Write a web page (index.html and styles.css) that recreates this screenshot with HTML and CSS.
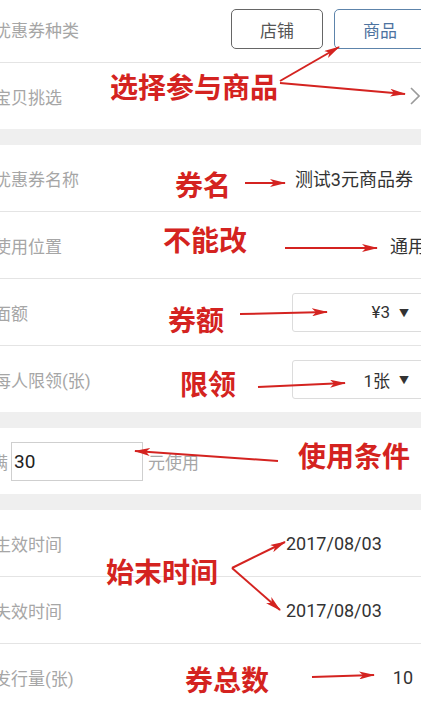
FILE: index.html
```html
<!DOCTYPE html>
<html lang="zh-CN">
<head>
    <meta charset="UTF-8">
    <meta name="viewport" content="width=device-width, initial-scale=1.0">
    <title>优惠券设置</title>
    <link rel="stylesheet" href="styles.css">
</head>
<body>

    <div class="page">
        <section class="group">
            <div class="row">
                <span class="label">优惠券种类</span>
                <div class="seg">
                    <button class="seg-btn">店铺</button>
                    <button class="seg-btn active">商品</button>
                </div>
            </div>
            <div class="row">
                <span class="label">宝贝挑选</span>
                <svg class="chevron" width="10" height="18" viewBox="0 0 10 18">
                    <polyline points="1,1 9,9 1,17" fill="none" stroke="#9a9a9a" stroke-width="1.6"/>
                </svg>
            </div>
        </section>

        <section class="group">
            <div class="row">
                <span class="label">优惠券名称</span>
                <span class="value">测试3元商品券</span>
            </div>
            <div class="row">
                <span class="label">使用位置</span>
                <span class="value value-edge">通用</span>
            </div>
            <div class="row">
                <span class="label">面额</span>
                <div class="select">¥3 <span class="caret">▼</span></div>
            </div>
            <div class="row">
                <span class="label">每人限领(张)</span>
                <div class="select">1张 <span class="caret">▼</span></div>
            </div>
        </section>

        <section class="group">
            <div class="row row-start">
                <span class="label label-tight">满</span>
                <input class="amount" type="text" value="30">
                <span class="label unit">元使用</span>
            </div>
        </section>

        <section class="group">
            <div class="row">
                <span class="label">生效时间</span>
                <span class="value date">2017/08/03</span>
            </div>
            <div class="row">
                <span class="label">失效时间</span>
                <span class="value date">2017/08/03</span>
            </div>
            <div class="row">
                <span class="label">发行量(张)</span>
                <span class="value">10</span>
            </div>
        </section>
    </div>

    <!-- red hand-drawn notes over the screenshot -->
    <div class="notes">
        <svg class="arrows" width="421" height="704" viewBox="0 0 421 704">
            <defs>
                <marker id="head" markerUnits="userSpaceOnUse" markerWidth="16" markerHeight="8" refX="15" refY="4" orient="auto">
                    <path d="M0,0 L16,4 L0,8 L4,4 Z" fill="#d42320"/>
                </marker>
            </defs>
            <g stroke="#d42320" stroke-width="2" fill="none" marker-end="url(#head)">
                <path d="M280 81 L339 47"/>
                <path d="M280 83 L405 94"/>
                <path d="M245 183 L285 183"/>
                <path d="M285 248 L377 248"/>
                <path d="M240 314 L327 312"/>
                <path d="M258 387 L345 383"/>
                <path d="M278 461 L135 451"/>
                <path d="M232 568 L285 542"/>
                <path d="M232 568 L280 610"/>
                <path d="M312 677 L374 675"/>
            </g>
        </svg>
        <span class="note" style="left:110px; top:72px">选择参与商品</span>
        <span class="note" style="left:175px; top:170px">券名</span>
        <span class="note" style="left:163px; top:225px">不能改</span>
        <span class="note" style="left:168px; top:305px">券额</span>
        <span class="note" style="left:180px; top:369px">限领</span>
        <span class="note" style="left:298px; top:441px">使用条件</span>
        <span class="note" style="left:106px; top:557px">始末时间</span>
        <span class="note" style="left:185px; top:665px">券总数</span>
    </div>

</body>
</html>
```

FILE: styles.css
```css
body { margin: 0; overflow: hidden; background: #efefef; font-family: Roboto, "Noto Sans CJK SC", sans-serif; position: relative; }
.page { margin: -4px -15px 0 -16px; }
.group { background: #fff; margin-bottom: 16px; }
.row {
    height: 66px; padding: 0 10px 0 10px; border-bottom: 1px solid #e4e4e4;
    display: flex; align-items: center; justify-content: space-between;
}
.row:last-child { border-bottom: none; }
.row-start { justify-content: flex-start; }
.label { font-size: 17px; color: #a6a6a6; }
.label-tight { margin-left: -3px; }
.unit { margin-left: 5px; }
.value { font-size: 18px; color: #333; margin-right: 13px; }
.value-edge { margin-right: 0; }
.date { width: 140px; margin-right: 0; }

.seg { display: flex; gap: 11px; }
.seg-btn {
    width: 92px; height: 40px; border: 1.5px solid #666; border-radius: 5px; background: #fff;
    font-family: inherit; font-size: 17px; color: #555;
}
.seg-btn.active { border-color: #5d84ab; color: #4d73a0; }
.chevron { margin-right: 6px; }

.select {
    width: 134px; height: 39px; box-sizing: border-box; border: 1px solid #dcdcdc; border-radius: 3px;
    display: flex; align-items: center; justify-content: flex-end; gap: 9px; padding-right: 16px;
    font-size: 17px; color: #333;
}
.caret { font-size: 10px; }

.amount {
    width: 132px; height: 39px; box-sizing: border-box; margin-left: 3px; padding: 0 2px;
    border: 1px solid #cfcfcf; font-family: inherit; font-size: 19px; color: #222; outline: none;
}

.notes { position: absolute; top: 0; left: 0; width: 421px; height: 704px; pointer-events: none; }
.arrows { position: absolute; top: 0; left: 0; }
.note {
    position: absolute; font-size: 28px; line-height: 28px; font-weight: 700; color: #d42320;
    font-family: "Noto Sans CJK SC", sans-serif; white-space: nowrap;
}
```
